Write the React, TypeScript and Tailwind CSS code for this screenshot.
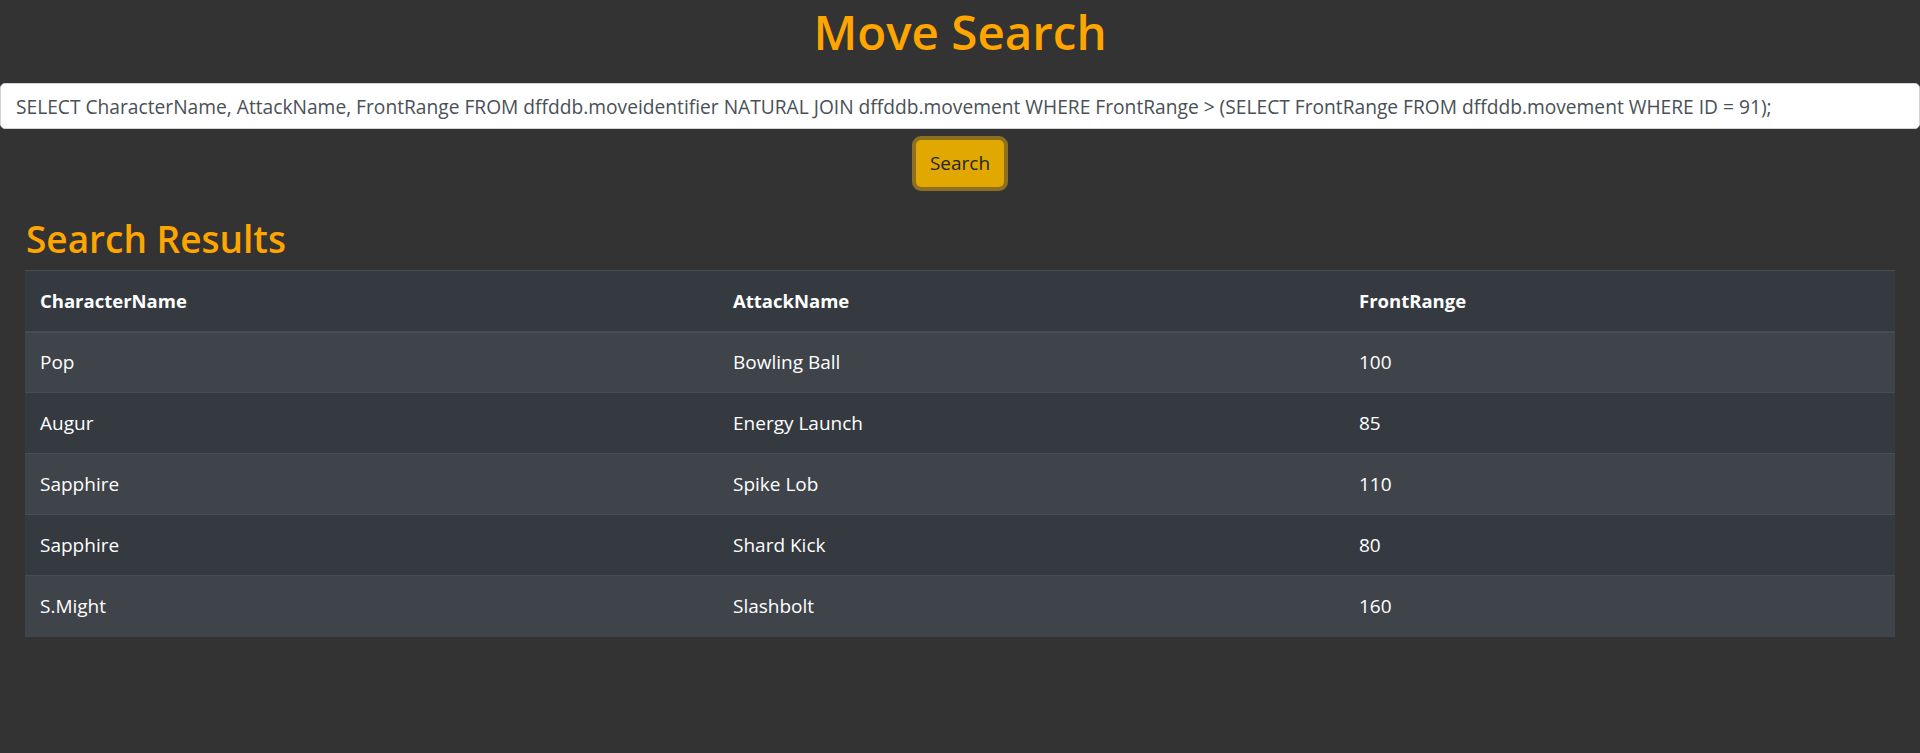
import React from 'react';

const query =
  'SELECT CharacterName, AttackName, FrontRange FROM dffddb.moveidentifier NATURAL JOIN dffddb.movement WHERE FrontRange > (SELECT FrontRange FROM dffddb.movement WHERE ID = 91);';

const rows = [
  { character: 'Pop', attack: 'Bowling Ball', range: '100' },
  { character: 'Augur', attack: 'Energy Launch', range: '85' },
  { character: 'Sapphire', attack: 'Spike Lob', range: '110' },
  { character: 'Sapphire', attack: 'Shard Kick', range: '80' },
  { character: 'S.Might', attack: 'Slashbolt', range: '160' },
];

function App() {
  return (
    <div className="min-h-[753px] bg-[#333333] font-['Open_Sans',sans-serif] text-[19px] text-white">
      <h1 className="text-center text-[47.5px] leading-[64px] font-semibold text-[#ffa500]">
        Move Search
      </h1>

      {/* search form */}
      <div className="mt-[19px]">
        <input
          type="text"
          defaultValue={query}
          className="block w-full h-[46px] rounded-[5px] border border-[#ced4da] bg-white px-[15px] text-[19.2px] text-[#495057] outline-none"
        />
      </div>
      <div className="flex justify-center mt-[11px]">
        <button className="h-[47px] w-[88px] rounded-[5px] bg-[#e0a800] text-[#212529] ring-4 ring-[#8c7020]">
          Search
        </button>
      </div>

      <div className="px-[25px] mt-[29px]">
        <h2 className="text-[37px] leading-[46px] font-semibold text-[#ffa500] pl-[1px]">Search Results</h2>
        <table className="mt-[8px] w-full border-collapse bg-[#343a40] text-left">
          <thead>
            <tr className="h-[61px] border-t border-[#454d55]">
              <th className="w-[693px] px-[15px] text-[18.5px] font-bold">CharacterName</th>
              <th className="w-[626px] px-[15px] text-[18.5px] font-bold">AttackName</th>
              <th className="px-[15px] text-[18.5px] font-bold">FrontRange</th>
            </tr>
          </thead>
          <tbody>
            {rows.map((r, i) => (
              <tr
                key={i}
                className={
                  (i === 0 ? 'border-t-2 ' : 'border-t ') +
                  (i % 2 === 0 ? 'h-[61px] border-[#454d55] bg-[#3f444b]' : 'h-[61px] border-[#454d55] bg-[#343a40]')
                }
              >
                <td className="px-[15px]">{r.character}</td>
                <td className="px-[15px]">{r.attack}</td>
                <td className="px-[15px]">{r.range}</td>
              </tr>
            ))}
          </tbody>
        </table>
      </div>
    </div>
  );
}

export default App;
